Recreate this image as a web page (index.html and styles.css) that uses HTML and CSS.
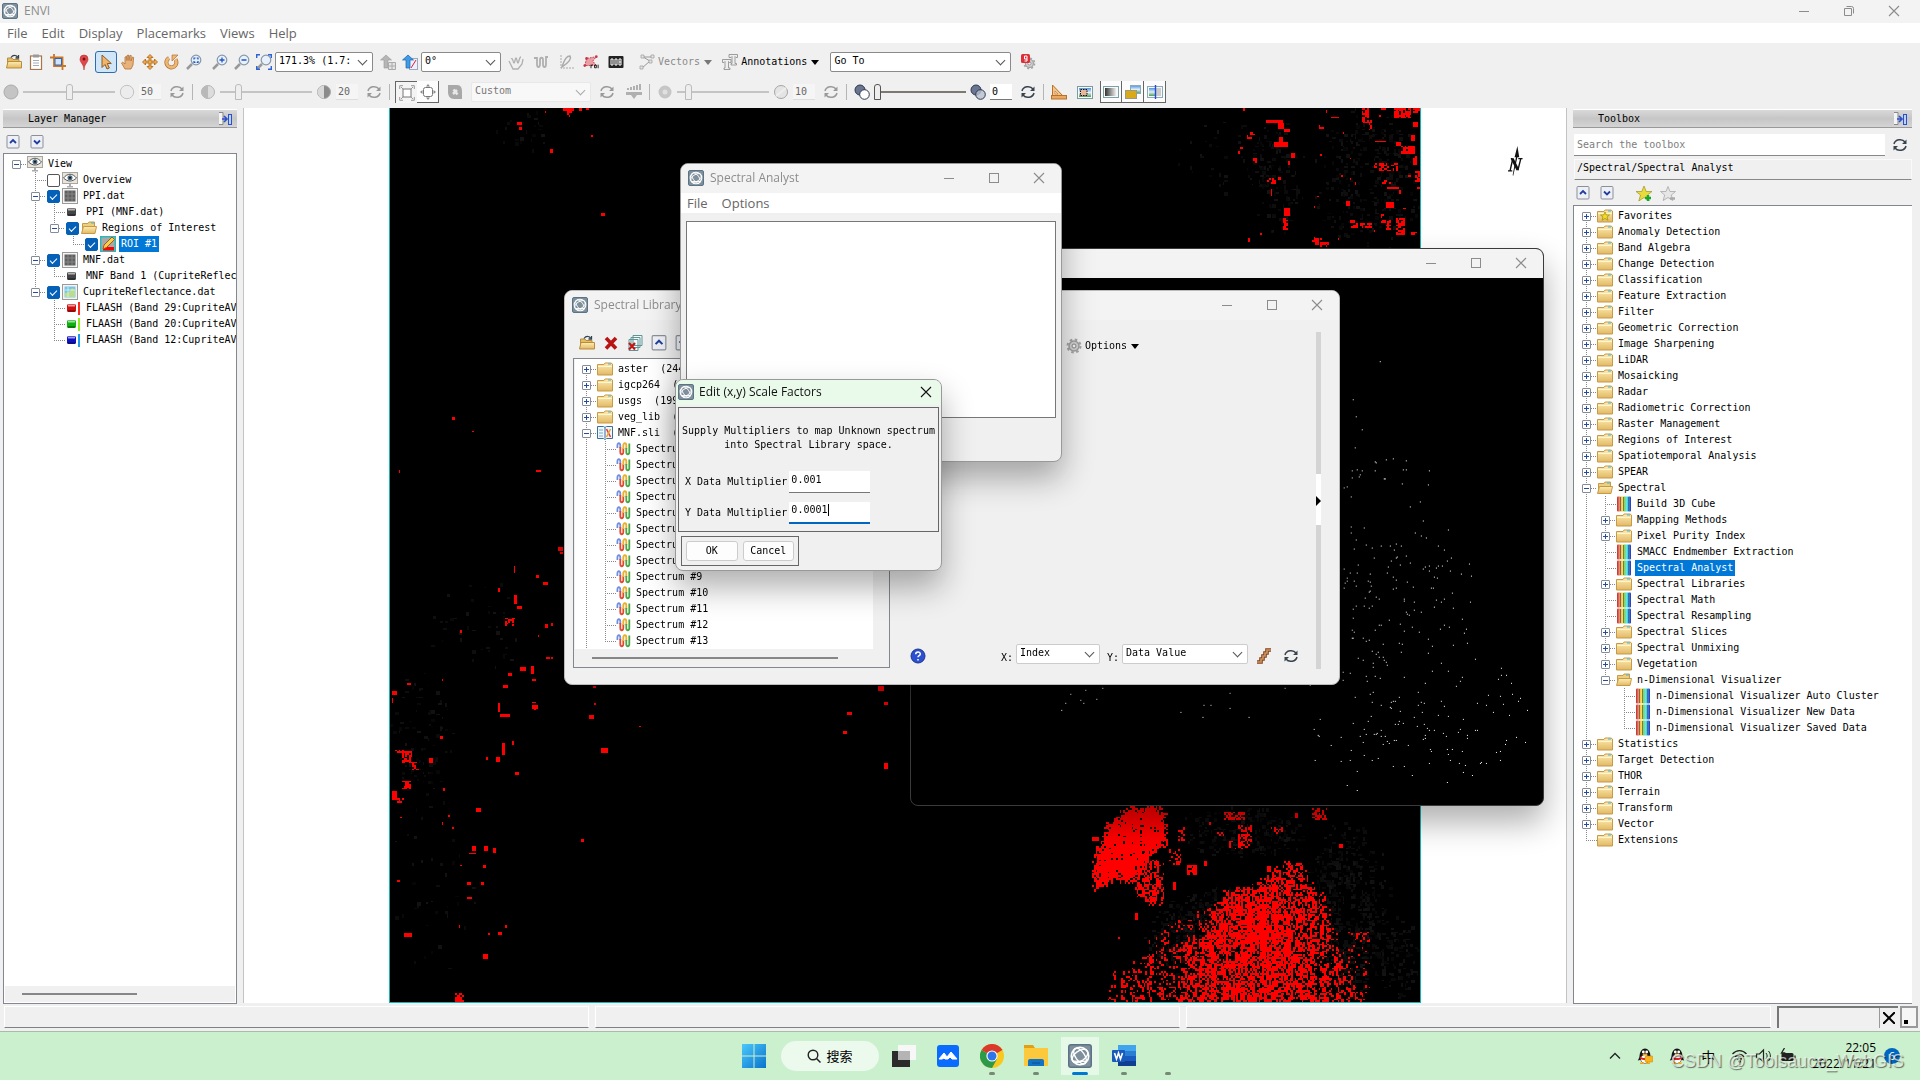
FILE: index.html
```html
<!DOCTYPE html>
<html lang="en">
<head>
<meta charset="utf-8">
<title>ENVI</title>
<link rel="stylesheet" href="styles.css">
</head>
<body>
<svg class="sprite" aria-hidden="true">
  <defs>
    <linearGradient id="gFolder" x1="0" y1="0" x2="0" y2="1"><stop offset="0" stop-color="#fdeeb4"/><stop offset="1" stop-color="#e2b864"/></linearGradient>
    <linearGradient id="gRain"><stop offset="0" stop-color="#c02828"/><stop offset=".2" stop-color="#f0987a"/><stop offset=".4" stop-color="#f8e04a"/><stop offset=".55" stop-color="#7fd06a"/><stop offset=".7" stop-color="#55f0f0"/><stop offset="1" stop-color="#2a2ab8"/></linearGradient>
    <linearGradient id="gWin" x1="0" y1="0" x2="1" y2="1"><stop offset="0" stop-color="#4cc8fb"/><stop offset="1" stop-color="#0873cc"/></linearGradient>
    <linearGradient id="gGray"><stop offset="0" stop-color="#333"/><stop offset="1" stop-color="#fff"/></linearGradient>
    <linearGradient id="gSky" x1="0" y1="0" x2="0" y2="1"><stop offset="0" stop-color="#4f93e0"/><stop offset=".5" stop-color="#dff0f8"/><stop offset="1" stop-color="#4e9a58"/></linearGradient>
  </defs>
  <symbol id="envi" viewBox="0 0 16 16"><rect x=".5" y=".5" width="15" height="15" rx="1.5" fill="#7f909d" stroke="#5b7385"/><g fill="none" stroke="#fff"><circle cx="8" cy="8" r="5.800" stroke-width="1.100"/><ellipse cx="8" cy="8" rx="6" ry="3" transform="rotate(55 8 8)" stroke-width=".9"/><ellipse cx="8" cy="8" rx="6" ry="3.400" transform="rotate(-35 8 8)" stroke-width=".9"/><path d="M3.500 11.500h9" stroke-width=".9"/></g></symbol>
  <symbol id="folder" viewBox="0 0 16 16"><path d="M.5 3.500h6.500l1-1.500h6l1.500 1v11H.5z" fill="url(#gFolder)" stroke="#c79a45"/><path d="M11 3h3" stroke="#45b3e0"/><path d="M1 5.500h14" stroke="#fff6cf"/></symbol>
  <symbol id="folderfav" viewBox="0 0 16 16"><use href="#folder"/><path d="M8 4l1.300 3h3.200L10 9l1 3.300L8 10.400 5 12.300 6 9 3.500 7h3.200z" fill="#f3dd1d" stroke="#9a8a12" stroke-width=".7"/></symbol>
  <symbol id="folderopen" viewBox="0 0 16 16"><path d="M1.500 13V3.500H7L8 2h5.500v4" fill="#edcf80" stroke="#c79a45"/><path d="M.5 13.500L2.500 6.500h13l-1.500 7z" fill="url(#gFolder)" stroke="#c79a45"/><path d="M10 3h3" stroke="#45b3e0"/></symbol>
  <symbol id="open" viewBox="0 0 16 16"><path d="M1.500 13V4H6l1 1.500h6V8" fill="#e5bd62" stroke="#b98d3c"/><path d="M.5 14L2 7.500h13.500V14z" fill="url(#gFolder)" stroke="#b98d3c"/><path d="M5 3.500c2-3 5-2.500 6.500-.5M12.500 1v3h-3" fill="none" stroke="#34424f" stroke-width="1.300"/></symbol>
  <symbol id="tool" viewBox="0 0 16 16"><rect x="1" y=".5" width="14" height="15" rx="1" fill="url(#gRain)"/><path d="M4.500 1v14M7.500 1v14" stroke="#222" stroke-opacity=".5"/><path d="M12.500 1v14" stroke="#124" stroke-opacity=".35"/></symbol>
  <symbol id="eye" viewBox="0 0 16 16"><rect x=".5" y=".5" width="15" height="11" fill="#e9e5dd" stroke="#a9a69f"/><path d="M5 14h6v1.500H5zM7 12h2v2H7z" fill="#aaa"/><path d="M1.500 6c4-5 9-5 13 0-4 4-9 4-13 0z" fill="#fff" stroke="#555"/><circle cx="8" cy="5.700" r="2.500" fill="#4b6b82"/><circle cx="8" cy="5.700" r="1" fill="#111"/></symbol>
  <symbol id="ras" viewBox="0 0 16 16"><rect x=".5" y=".5" width="15" height="15" fill="#f4f4f4" stroke="#9a9a9a"/><rect x="2.500" y="2.500" width="11" height="11" fill="#606060"/><path d="M3 6h10M3 10h10M6 3v10M10 3v10" stroke="#858585"/></symbol>
  <symbol id="rasc" viewBox="0 0 16 16"><rect x=".5" y=".5" width="15" height="15" fill="#f4f4f4" stroke="#9a9a9a"/><rect x="2.500" y="2.500" width="11" height="11" fill="#7cc3e2"/><path d="M3 13V9l4-1 3-4 3 2v7z" fill="#b9dc8e"/><path d="M6 3v10M3 6h10" stroke="#dff" stroke-opacity=".7"/></symbol>
  <symbol id="band" viewBox="0 0 10 10"><rect y="1" width="9" height="8" rx="1.500" fill="currentColor"/><path d="M1 2.500h7" stroke="#fff" stroke-opacity=".6" stroke-width="2"/><path d="M1 8h7" stroke="#000" stroke-opacity=".6"/></symbol>
  <symbol id="roi" viewBox="0 0 16 16"><rect x=".7" y=".7" width="14.600" height="14.600" fill="#a8a8a8" stroke="#2ab7b7" stroke-width="1.400"/><path d="M3 11h11v3.500H3z" fill="#f00"/><path d="M3 13l1-4 8-8 2.500 2.500-8 8z" fill="#f5d14a" stroke="#a65a1c"/></symbol>
  <symbol id="wave" viewBox="0 0 14 14"><g fill="none" stroke-width="1.800"><path d="M.9 6V3.500c0-3 2.900-3 2.900 0V6" stroke="#6f90e0"/><path d="M3.800 5v5c0 3 3 3 3 0V6" stroke="#e04a32"/><path d="M6.800 7V3.500c0-3 3-3 3 0V7" stroke="#e9b02c"/><path d="M9.800 6v4c0 3 3 3 3 0V1.500" stroke="#4aa548"/></g></symbol>
  <symbol id="sli" viewBox="0 0 16 16"><path d="M.5 1.500h6l1.500 1 1.500-1h6v12h-6l-1.500 1-1.500-1h-6z" fill="#eef6ff" stroke="#3b6f98"/><path d="M8 3v10" stroke="#3b6f98"/><path d="M9.500 4l4 8" stroke="#e33" stroke-width="1.500"/><path d="M13.500 4l-4 8" stroke="#e9a52c" stroke-width="1.500"/><path d="M2 5h4M2 8h4M2 11h4" stroke="#7ab"/></symbol>
  <symbol id="ref" viewBox="0 0 16 16"><g fill="none" stroke="currentColor" stroke-width="1.500"><path d="M2 7c1-4.500 8-6 11-2"/><path d="M14 9c-1 4.500-8 6-11 2"/></g><path d="M14.500 2.500v4.500H10zM1.500 13.500V9H6z" fill="currentColor"/></symbol>
  <symbol id="up" viewBox="0 0 14 14"><rect x="1" y=".5" width="12" height="12.500" rx="1" fill="#eef0f6" stroke="#8a8f98"/><path d="M4 8l3-3 3 3" fill="none" stroke="#1f3fa0" stroke-width="1.800"/></symbol>
  <symbol id="down" viewBox="0 0 14 14"><rect x="1" y=".5" width="12" height="12.500" rx="1" fill="#eef0f6" stroke="#8a8f98"/><path d="M4 5.500l3 3 3-3" fill="none" stroke="#1f3fa0" stroke-width="1.800"/></symbol>
  <symbol id="dock" viewBox="0 0 14 14"><path d="M1 .5h4v12H1" fill="#f4f4f4" stroke="#888"/><path d="M4 7h4M6 4l3 3-3 3" fill="none" stroke="#2b51c9" stroke-width="1.600"/><rect x="10.500" y="2.500" width="3" height="10" fill="#bcd0ff" stroke="#2b51c9"/></symbol>
  <symbol id="clip" viewBox="0 0 16 16"><rect x="2.500" y="2" width="11" height="13.500" fill="#fff" stroke="#a5764e" stroke-width="1.200"/><rect x="5" y=".5" width="6" height="3" fill="#999"/><path d="M5 6.500h6M5 9h6M5 11.500h6" stroke="#aab"/></symbol>
  <symbol id="crop" viewBox="0 0 16 16"><path d="M4 0v12h12M0 3.500h12.500V16" fill="none" stroke="#c8762a" stroke-width="1.800"/><rect x="5" y="4.500" width="6.500" height="6.500" fill="#cfe3fa" stroke="#3464ae"/></symbol>
  <symbol id="pin" viewBox="0 0 16 16"><path d="M8 16C8 10 4 9 4 5a4 4 0 018 0c0 4-4 5-4 11z" fill="#e0484c" stroke="#b8282e" stroke-width=".6"/><circle cx="8" cy="5" r="1.500" fill="#7a1014"/></symbol>
  <symbol id="cur" viewBox="0 0 16 16"><path d="M4 1v12.500l3-3 2 4.500 2.300-1-2-4.500h4z" fill="#efb56c" stroke="#8d5a20"/></symbol>
  <symbol id="hand" viewBox="0 0 16 16"><path d="M5 15L1.500 9l1.200-.8L5 10V3l1.500-.5.5 4V1.500L8.500 1 9 6.500l.8-5h1.400L11 7l1.400-4 1.200.4L13 11l-2 4z" fill="#e8b27a" stroke="#b0713a" stroke-width=".8"/></symbol>
  <symbol id="move" viewBox="0 0 16 16"><path d="M8 .5l3 3H9v3.500h3.500V5l3 3-3 3V9H9v3.500h2l-3 3-3-3h2V9H3.500v2l-3-3 3-3v2H7V3.500H5z" fill="#f0a848" stroke="#a9661a" stroke-width=".8"/></symbol>
  <symbol id="rot" viewBox="0 0 16 16"><path d="M5 4a5 5 0 106.500 1.500" fill="none" stroke="#b0713a" stroke-width="4"/><path d="M5 4a5 5 0 106.500 1.500" fill="none" stroke="#efb872" stroke-width="2.600"/><path d="M8 7V1h6z" fill="#efb872" stroke="#b0713a" stroke-width=".7"/></symbol>
  <symbol id="mag" viewBox="0 0 16 16"><path d="M1 15l5-5" stroke="#999" stroke-width="2.500"/><circle cx="10" cy="6" r="4.800" fill="#e6f1fc" stroke="#8897a8" stroke-width="1.200"/></symbol>
  <symbol id="magf" viewBox="0 0 16 16"><use href="#mag"/><path d="M8 5.500V4h1.500M10.700 4H12v1.500M12 7v1.300h-1.300M9.500 8.300H8V7" fill="none" stroke="#2356c0" stroke-width="1.200"/></symbol>
  <symbol id="magp" viewBox="0 0 16 16"><use href="#mag"/><path d="M7.500 6h5M10 3.500v5" stroke="#2356c0" stroke-width="1.300"/></symbol>
  <symbol id="magm" viewBox="0 0 16 16"><use href="#mag"/><path d="M7.500 6h5" stroke="#2356c0" stroke-width="1.500"/></symbol>
  <symbol id="mage" viewBox="0 0 16 16"><use href="#mag"/><path d="M.7 4V.7H4M12 .7h3.300V4M15.300 12v3.300H12M4 15.300H.7V12" fill="none" stroke="#2f62d4" stroke-width="1.400"/></symbol>
  <symbol id="upg" viewBox="0 0 16 16"><path d="M6 1l5.500 5H8v8H4V6H.5z" fill="#b5b5b5" stroke="#999" stroke-width=".6"/><path d="M8.500 8.500h7v7h-7zM8.500 12h7M12 8.500v7" fill="#e3e3e3" stroke="#aaa"/></symbol>
  <symbol id="upb" viewBox="0 0 16 16"><rect x="7.500" y="4.500" width="8" height="11" fill="#eef" stroke="#9ab"/><path d="M6 1l5.500 5H8v8H4V6H.5z" fill="#3f9be6" stroke="#1c62ad" stroke-width=".7"/><path d="M9 14l5-8" stroke="#d22"/></symbol>
  <symbol id="zig" viewBox="0 0 16 16"><path d="M1 4h3v6c0 4 3 4 3 0V6c0-3 3-3 3 0v4c0 4 3 4 3 0V3h2" fill="none" stroke="#b0b0b0" stroke-width="1.800"/></symbol>
  <symbol id="zigh" viewBox="0 0 16 16"><path d="M1 7l4 8h5l4-5 1-5M3 5c2-2 2 4 3 4s1-5 2-5 1 5 2 5 1-6 3-6" fill="none" stroke="#b0b0b0" stroke-width="1.300"/></symbol>
  <symbol id="plot" viewBox="0 0 16 16"><path d="M3 1v13h13" fill="none" stroke="#aaa" stroke-dasharray="2 1"/><path d="M4 13C7 4 9 2 12 2c2 3-2 7-8 11z" fill="none" stroke="#aaa" stroke-width="1.500"/></symbol>
  <symbol id="roit" viewBox="0 0 18 16"><path d="M2 12L4 4l11-2-4 5 4 5z" fill="#eb9da4" stroke="#c4354a" stroke-dasharray="2 1"/><circle cx="2" cy="12" r="1.500" fill="#c4354a"/><circle cx="4" cy="4" r="1.500" fill="#c4354a"/><circle cx="15" cy="2" r="1.500" fill="#c4354a"/><path d="M9 11v4M9 12l2-1M13 11.500h2v3h-2zM17 11v4" stroke="#111" fill="none"/></symbol>
  <symbol id="counter" viewBox="0 0 16 16"><rect x=".5" y="2" width="15" height="12" rx="1" fill="#222"/><path d="M3 5h2v6H3zM7 5h2v6H7zM11 5h2v6h-2zM11 8h2" fill="none" stroke="#fff"/></symbol>
  <symbol id="vec" viewBox="0 0 16 16"><path d="M4 3l7 4-8 7M5 3h8" fill="none" stroke="#999"/><path d="M2 1h3v3H2zM12 1h3v3h-3zM10 6h3v3h-3zM1 12h3v3H1z" fill="#e6e6e6" stroke="#999" stroke-width=".7"/></symbol>
  <symbol id="anno" viewBox="0 0 16 16"><g fill="#eee" stroke="#888" stroke-width=".8"><path d="M7 .5h8.500v3h-1.500l-1-1v7h1.500V11H9V9.500h1v-7l-1 1H7z"/><path d="M.5 5.500H9v3H7.500l-1-1V14H8v1.500H2V14h1V7.500l-1 1H.5z"/></g></symbol>
  <symbol id="gear" viewBox="0 0 16 16"><circle cx="8" cy="8" r="6.500" fill="none" stroke="#a5a5a5" stroke-width="2" stroke-dasharray="2.600 2.500"/><circle cx="8" cy="8" r="5" fill="#d0d0d0" stroke="#a0a0a0" stroke-width="1.500"/><circle cx="8" cy="8" r="2" fill="#f4f4f4" stroke="#888"/></symbol>
  <symbol id="gear9" viewBox="0 0 16 16"><g transform="translate(3 3) scale(.8)"><use href="#gear" width="16" height="16"/></g><rect x="1" y="0" width="9" height="9" rx="1.500" fill="#dc3038"/><path d="M7 5H4.500V2H7v5H4.500" fill="none" stroke="#fff"/></symbol>
  <symbol id="ball" viewBox="0 0 16 16"><circle cx="8" cy="8" r="7" fill="#c4c4c4" stroke="#aaa"/></symbol>
  <symbol id="ballw" viewBox="0 0 16 16"><circle cx="8" cy="8" r="6.700" fill="#ececec" stroke="#c2c2c2"/></symbol>
  <symbol id="half" viewBox="0 0 16 16"><circle cx="8" cy="8" r="6.500" fill="#dcdcdc" stroke="#b5b5b5"/><path d="M8 1.500a6.500 6.500 0 000 13z" fill="#b9b9b9"/></symbol>
  <symbol id="half2" viewBox="0 0 16 16"><circle cx="8" cy="8" r="6.500" fill="#8b8b8b" stroke="#aaa"/><path d="M8 1.500a6.500 6.500 0 000 13z" fill="#d9d9d9"/></symbol>
  <symbol id="ring" viewBox="0 0 16 16"><circle cx="8" cy="8" r="4.500" fill="#e0e0e0" stroke="#c6c6c6" stroke-width="4"/></symbol>
  <symbol id="sharp" viewBox="0 0 16 16"><circle cx="8" cy="8" r="6.500" fill="#e4e4e4" stroke="#a5a5a5"/><path d="M3 12L13 4" stroke="#eee" stroke-width="2"/></symbol>
  <symbol id="two" viewBox="0 0 16 16"><circle cx="6" cy="6" r="5" fill="#6a7590" stroke="#2d3850"/><circle cx="10.500" cy="10.500" r="4.800" fill="#fff" stroke="#2d3850"/></symbol>
  <symbol id="two2" viewBox="0 0 16 16"><circle cx="6" cy="6" r="5" fill="#6a7590" stroke="#2d3850"/><circle cx="10.500" cy="10.500" r="4.800" fill="#b8c0d0" fill-opacity=".8" stroke="#2d3850"/></symbol>
  <symbol id="ext" viewBox="0 0 16 16"><rect x="4" y="4" width="8" height="8" fill="#fff" stroke="#777"/><path d="M.7 4V.7H4M12 .7h3.300V4M15.300 12v3.300H12M4 15.300H.7V12M4 4L2 2M12 4l2-2M4 12l-2 2M12 12l2 2" fill="none" stroke="#999"/></symbol>
  <symbol id="ext2" viewBox="0 0 16 16"><rect x="3.500" y="3.500" width="9" height="9" rx="2" fill="#fff" stroke="#777"/><path d="M8 0l2 2.500H6zM8 16l2-2.500H6zM0 8l2.500-2v4zM16 8l-2.500-2v4z" fill="#888"/></symbol>
  <symbol id="leaf" viewBox="0 0 16 16"><path d="M1 1h9c4 0 5 3 5 7v7H7c-4 0-6-3-6-7z" fill="#a8a8a8"/><path d="M6 10l4-4M6.500 5.500l4 5" fill="none" stroke="#e8e8e8" stroke-width="2.500"/></symbol>
  <symbol id="hist" viewBox="0 0 16 16"><path d="M1 6V4h2v2zM4 6V3h2v3zM7 6V2h2v4zM10 6V1h2v5zM13 6V0h2v6zM0 8h16v3H0zM5 11h6l-3 4z" fill="#b0b0b0"/></symbol>
  <symbol id="meas" viewBox="0 0 16 16"><path d="M1.500 1v11L12 12z" fill="#f3c48c" stroke="#b8722a"/><path d="M4 7v3h3z" fill="#f0f0f0" stroke="#b8722a" stroke-width=".6"/><rect x=".5" y="11.500" width="15" height="3.500" fill="#eba860" stroke="#b8722a"/></symbol>
  <symbol id="pic" viewBox="0 0 16 16"><rect x=".5" y="2.500" width="15" height="12" fill="#f8f8f8" stroke="#7a9aa8"/><rect x="2" y="4" width="12" height="9" fill="url(#gSky)"/><rect x="3.500" y="5.500" width="6.500" height="6" fill="#e9b69a" stroke="#111" stroke-dasharray="1.500 1"/></symbol>
  <symbol id="grad" viewBox="0 0 16 16"><rect x=".5" y="2.500" width="15" height="11" fill="#f8f8f8" stroke="#7aa0a8"/><rect x="2" y="4" width="12" height="8" fill="url(#gGray)"/></symbol>
  <symbol id="stack" viewBox="0 0 16 16"><rect x="5.500" y="1.500" width="10" height="8" fill="url(#gSky)" stroke="#8ab"/><rect x=".5" y="6.500" width="11" height="8" fill="#d9a91a" stroke="#9a9a80"/></symbol>
  <symbol id="swipe" viewBox="0 0 16 16"><rect x=".5" y="2.500" width="15" height="11" fill="#f8f8f8" stroke="#8ab"/><rect x="2" y="4" width="6" height="8" fill="url(#gSky)"/><rect x="8" y="4" width="6" height="8" fill="#ccc"/><path d="M8.500 1v14" stroke="#2448d8" stroke-width="1.400"/></symbol>
  <symbol id="staradd" viewBox="0 0 16 16"><path d="M8 0l2.200 5.500H16L11.500 9l1.700 6L8 11.500 2.800 15l1.700-6L0 5.500h5.800z" fill="#eadb3c" stroke="#9c9320" stroke-width=".7"/><path d="M12 9v6M9 12h6" stroke="#17a52c" stroke-width="2.400"/></symbol>
  <symbol id="starsub" viewBox="0 0 16 16"><path d="M8 .5l2 5h5.500L11.300 9l1.500 5.500L8 11.500 3.200 14.500 4.700 9 .5 5.500H6z" fill="#e6e6e6" stroke="#b5b5b5"/><path d="M10 12.500h5" stroke="#aaa" stroke-width="2.400"/></symbol>
  <symbol id="x" viewBox="0 0 16 16"><path d="M3 3l10 10.500M13 3L3 13.500" stroke="#b81414" stroke-width="3.600"/></symbol>
  <symbol id="xall" viewBox="0 0 16 16"><path d="M6 .5h9v10H6zM4 2.500h9v10H4zM2 4.500h9v11H2z" fill="#f4fafa" stroke="#5e9494"/><path d="M2 8l6 6.500M8 8l-6 6.500" stroke="#c01818" stroke-width="2.200"/></symbol>
  <symbol id="help" viewBox="0 0 16 16"><circle cx="8" cy="8" r="7" fill="#2c50d0" stroke="#1b358f"/><path d="M5.700 6.300c0-3 4.600-3 4.600-.3 0 1.600-2.300 1.600-2.300 3.300M8 11v1.500" fill="none" stroke="#fff" stroke-width="1.500"/></symbol>
  <symbol id="stair" viewBox="0 0 16 16"><path d="M1 14h4v-3h2V8h2V5h2V2h4" fill="none" stroke="#7d4320" stroke-width="3.600"/><path d="M1 14h4v-3h2V8h2V5h2V2h4" fill="none" stroke="#d4935a" stroke-width="1.600"/></symbol>
  <symbol id="north" viewBox="0 0 16 32"><path d="M10 0l2 12h-2L5.500 32 5 31 8.500 12H7z" fill="#111"/><path d="M0 26.500h4.500M2.300 26L5 14M3 13.500h2" fill="none" stroke="#111" stroke-width="1.500"/><path d="M4.500 13.500l6 12" stroke="#111" stroke-width="3"/><path d="M10.500 26l3-12M11 13.500h4.500" fill="none" stroke="#111" stroke-width="1.500"/></symbol>
  <symbol id="wmin" viewBox="0 0 12 12"><path d="M1 6.500h10" stroke="currentColor"/></symbol>
  <symbol id="wmax" viewBox="0 0 12 12"><rect x="1.500" y="1.500" width="9" height="9" fill="none" stroke="currentColor"/></symbol>
  <symbol id="wres" viewBox="0 0 12 12"><path d="M1.500 3.500h7v7h-7zM3.500 1.500h5q2 0 2 2v5" fill="none" stroke="currentColor"/></symbol>
  <symbol id="wcl" viewBox="0 0 12 12"><path d="M1 1l10 10M11 1L1 11" stroke="currentColor" stroke-width="1.100"/></symbol>
  <symbol id="cross" viewBox="0 0 12 12"><path d="M0 0l12 12M12 0L0 12" stroke="#000" stroke-width="2"/></symbol>
  <symbol id="qq" viewBox="0 0 16 16"><ellipse cx="8" cy="8" rx="5.500" ry="7.500" fill="#151515"/><path d="M3 8L.8 12.500 3 12zM13 8l2.200 4.500L13 12z" fill="#151515"/><ellipse cx="8" cy="11" rx="4" ry="4" fill="#fff"/><path d="M3 8.500c3 2 7 2 10 0v2c-3 2-7 2-10 0z" fill="#e02020"/><circle cx="6.300" cy="4" r="1.400" fill="#fff"/><circle cx="9.700" cy="4" r="1.400" fill="#fff"/><ellipse cx="8" cy="6.500" rx="2.500" ry="1" fill="#f3a51a"/><path d="M3 15.200h4M9 15.200h4" stroke="#f3a51a" stroke-width="1.500"/></symbol>
  <symbol id="qqc" viewBox="0 0 16 16"><use href="#qq"/><rect x="8" y="8" width="8" height="6" rx="1" fill="#f8b41c" stroke="#c67c10" stroke-width=".5"/></symbol>
</svg>

<header class="titlebar">
  <svg class="i16"><use href="#envi"/></svg><span class="caption">ENVI</span>
  <div class="winbtns"><button aria-label="Minimize"><svg><use href="#wmin"/></svg></button><button aria-label="Restore"><svg><use href="#wres"/></svg></button><button aria-label="Close"><svg><use href="#wcl"/></svg></button></div>
</header>
<nav class="menubar"><button>File</button><button>Edit</button><button>Display</button><button>Placemarks</button><button>Views</button><button>Help</button></nav>

<div class="toolbars">
  <div class="bar">
    <div class="grp">
      <button class="tb" aria-label="Open"><svg><use href="#open"/></svg></button><button class="tb" aria-label="Data Manager"><svg><use href="#clip"/></svg></button><button class="tb" aria-label="Crop"><svg><use href="#crop"/></svg></button>
    </div>
    <div class="grp">
      <button class="tb" aria-label="Placemark"><svg><use href="#pin"/></svg></button><button class="tb on" aria-label="Select"><svg><use href="#cur"/></svg></button><button class="tb" aria-label="Pan"><svg><use href="#hand"/></svg></button><button class="tb" aria-label="Fly"><svg><use href="#move"/></svg></button><button class="tb" aria-label="Rotate"><svg><use href="#rot"/></svg></button><button class="tb" aria-label="Zoom"><svg><use href="#magf"/></svg></button>
    </div>
    <div class="grp">
      <button class="tb" aria-label="Zoom in"><svg><use href="#magp"/></svg></button><button class="tb" aria-label="Zoom out"><svg><use href="#magm"/></svg></button><button class="tb" aria-label="Zoom to extent"><svg><use href="#mage"/></svg></button>
      <span class="sel w-zoom"><select aria-label="Zoom level"><option>171.3% (1.7:1)</option></select></span>
    </div>
    <div class="grp">
      <button class="tb" aria-label="North up"><svg><use href="#upg"/></svg></button><button class="tb" aria-label="Rotate to"><svg><use href="#upb"/></svg></button>
      <span class="sel w-rot"><select aria-label="Rotation"><option>0°</option></select></span>
    </div>
    <div class="grp five">
      <button class="tb" aria-label="Spectral profile"><svg><use href="#zigh"/></svg></button><button class="tb" aria-label="Arbitrary profile"><svg><use href="#zig"/></svg></button><button class="tb" aria-label="Scatter plot"><svg><use href="#plot"/></svg></button><button class="tb" aria-label="Region of interest"><svg><use href="#roit"/></svg></button><button class="tb" aria-label="Feature counting"><svg><use href="#counter"/></svg></button>
    </div>
    <button class="drop off"><svg><use href="#vec"/></svg>Vectors<i></i></button>
    <button class="drop"><svg><use href="#anno"/></svg>Annotations<i></i></button>
    <span class="sel w-goto"><select aria-label="Go to"><option>Go To</option></select></span>
    <button class="tb last" aria-label="Jobs"><svg><use href="#gear9"/></svg></button>
  </div>
  <div class="bar second">
    <div class="grp adj"><svg class="ic"><use href="#ball"/></svg><input type="range" aria-label="Brightness" value="50" disabled><svg class="ic"><use href="#ballw"/></svg><input type="text" aria-label="Brightness value" value="50" disabled><button class="tb gray" aria-label="Reset brightness"><svg><use href="#ref"/></svg></button></div>
    <hr>
    <div class="grp adj"><svg class="ic"><use href="#half"/></svg><input type="range" aria-label="Contrast" value="18" disabled><svg class="ic"><use href="#half2"/></svg><input type="text" aria-label="Contrast value" value="20" disabled><button class="tb gray" aria-label="Reset contrast"><svg><use href="#ref"/></svg></button></div>
    <hr>
    <div class="grp custom"><button class="tg" aria-label="Stretch on view"><svg><use href="#ext"/></svg></button><button class="tg" aria-label="Stretch on full"><svg><use href="#ext2"/></svg></button><svg class="ic"><use href="#leaf"/></svg><span class="sel off w-custom"><select aria-label="Stretch" disabled><option>Custom</option></select></span><button class="tb gray" aria-label="Reset stretch"><svg><use href="#ref"/></svg></button><button class="tb" aria-label="Histogram"><svg><use href="#hist"/></svg></button></div>
    <hr>
    <div class="grp adj"><svg class="ic"><use href="#ring"/></svg><input type="range" aria-label="Sharpen" value="9" disabled><svg class="ic"><use href="#sharp"/></svg><input type="text" aria-label="Sharpen value" value="10" disabled><button class="tb gray" aria-label="Reset sharpen"><svg><use href="#ref"/></svg></button></div>
    <hr>
    <div class="grp adj"><svg class="ic"><use href="#two"/></svg><input type="range" aria-label="Transparency" value="0"><svg class="ic"><use href="#two2"/></svg><input type="text" aria-label="Transparency value" value="0"><button class="tb" aria-label="Reset transparency"><svg><use href="#ref"/></svg></button></div>
    <hr>
    <div class="grp wide"><button class="tb" aria-label="Measure"><svg><use href="#meas"/></svg></button><button class="tb" aria-label="Chip view"><svg><use href="#pic"/></svg></button><div class="grp"><button class="tg" aria-label="Blend"><svg><use href="#grad"/></svg></button><button class="tg" aria-label="Flicker"><svg><use href="#stack"/></svg></button><button class="tg" aria-label="Swipe"><svg><use href="#swipe"/></svg></button></div></div>
  </div>
</div>

<main class="work">
  <aside class="layers">
    <h2 class="dockhead">Layer Manager<svg><use href="#dock"/></svg></h2>
    <div class="minis"><button aria-label="Collapse all"><svg><use href="#up"/></svg></button><button aria-label="Expand all"><svg><use href="#down"/></svg></button></div>
    <div class="treebox"><ul class="tree" id="layerTree"></ul><div class="hscroll"><span></span></div></div>
  </aside>
  <section class="view">
    <canvas id="raster" class="raster" width="600" height="521"></canvas>
    <svg class="north"><use href="#north"/></svg>
  </section>
  <aside class="toolbox">
    <h2 class="dockhead">Toolbox<svg><use href="#dock"/></svg></h2>
    <div class="search"><input type="text" aria-label="Search the toolbox" placeholder="Search the toolbox"><button class="tb" aria-label="Refresh"><svg><use href="#ref"/></svg></button></div>
    <input class="path" type="text" aria-label="Tool path" value="/Spectral/Spectral Analyst" readonly>
    <div class="minis"><button aria-label="Collapse all"><svg><use href="#up"/></svg></button><button aria-label="Expand all"><svg><use href="#down"/></svg></button><button class="star" aria-label="Add favorite"><svg><use href="#staradd"/></svg></button><button aria-label="Remove favorite"><svg><use href="#starsub"/></svg></button></div>
    <div class="treebox"><ul class="tree" id="toolTree"></ul></div>
  </aside>
</main>

<footer class="status"><span></span><span></span><span></span><div class="sunk"><button aria-label="Cancel task"><svg><use href="#cross"/></svg></button></div><button class="corner" aria-label="Task list"><i></i></button></footer>

<section class="win plot">
  <header><div class="winbtns"><button aria-label="Minimize"><svg><use href="#wmin"/></svg></button><button aria-label="Maximize"><svg><use href="#wmax"/></svg></button><button aria-label="Close"><svg><use href="#wcl"/></svg></button></div></header>
  <canvas id="scatter" width="631" height="526"></canvas>
</section>

<section class="win library">
  <header><svg class="i16"><use href="#envi"/></svg><span class="caption">Spectral Library Viewer</span><div class="winbtns"><button aria-label="Minimize"><svg><use href="#wmin"/></svg></button><button aria-label="Maximize"><svg><use href="#wmax"/></svg></button><button aria-label="Close"><svg><use href="#wcl"/></svg></button></div></header>
  <div class="libbody">
    <div class="libleft">
      <div class="libtools"><button class="tb" aria-label="Open"><svg><use href="#open"/></svg></button><button class="tb" aria-label="Remove"><svg><use href="#x"/></svg></button><button class="tb" aria-label="Remove all"><svg><use href="#xall"/></svg></button><button class="tb" aria-label="Collapse"><svg><use href="#up"/></svg></button><button class="tb" aria-label="Expand"><svg><use href="#down"/></svg></button></div>
      <div class="treebox"><ul class="tree" id="libTree"></ul><div class="hscroll"><span></span></div></div>
    </div>
    <div class="libplot">
      <button class="drop"><svg><use href="#gear"/></svg>Options<i></i></button>
      <div class="axes">
        <button class="tb help" aria-label="Help"><svg><use href="#help"/></svg></button>
        <label for="ax">X:</label><span class="sel w-x"><select id="ax"><option>Index</option></select></span>
        <label for="ay">Y:</label><span class="sel w-y"><select id="ay"><option>Data Value</option></select></span>
        <button class="tb" aria-label="Stack"><svg><use href="#stair"/></svg></button><button class="tb" aria-label="Reset"><svg><use href="#ref"/></svg></button>
      </div>
    </div>
    <button class="grip" aria-label="Show panel"><i></i></button>
  </div>
</section>

<section class="win analyst">
  <header><svg class="i16"><use href="#envi"/></svg><span class="caption">Spectral Analyst</span><div class="winbtns"><button aria-label="Minimize"><svg><use href="#wmin"/></svg></button><button aria-label="Maximize"><svg><use href="#wmax"/></svg></button><button aria-label="Close"><svg><use href="#wcl"/></svg></button></div></header>
  <nav class="menubar"><button>File</button><button>Options</button></nav>
  <div class="list"></div>
</section>

<form class="win dialog" onsubmit="return false">
  <header><svg class="i16"><use href="#envi"/></svg><span class="caption">Edit (x,y) Scale Factors</span><div class="winbtns"><button type="button" aria-label="Close"><svg><use href="#wcl"/></svg></button></div></header>
  <div class="fields">
    <p>Supply Multipliers to map Unknown spectrum<br>into Spectral Library space.</p>
    <div class="field"><label for="mx">X Data Multiplier</label><input id="mx" type="text" value="0.001"></div>
    <div class="field active"><label for="my">Y Data Multiplier</label><input id="my" type="text" value="0.0001"><i class="caret"></i></div>
  </div>
  <div class="actions"><button>OK</button><button type="button">Cancel</button></div>
</form>

<footer class="taskbar">
  <div class="apps">
    <button class="app" aria-label="Start"><svg viewBox="0 0 24 24"><path d="M0 0h11.500v11.500H0zM12.500 0H24v11.500H12.500zM0 12.500h11.500V24H0zM12.500 12.500H24V24H12.500z" fill="url(#gWin)"/></svg></button>
    <button class="find"><svg viewBox="0 0 14 14"><circle cx="6" cy="6" r="4.800" fill="none" stroke="#222" stroke-width="1.400"/><path d="M9.500 9.500L13.500 13.500" stroke="#222" stroke-width="1.500"/></svg>搜索</button>
    <button class="app" aria-label="Task view"><svg viewBox="0 0 24 24"><path d="M6 1h18v15H6z" fill="#f7f7f7"/><path d="M0 7h18v16H0z" fill="#2b2b2b"/><path d="M6 7h12v9H6z" fill="#b4b4b4"/></svg></button>
    <button class="app" aria-label="Meetings"><svg viewBox="0 0 24 24"><rect x="1" y="1" width="22" height="22" rx="3" fill="#0a6cff"/><path d="M3 15l5-6 3 4 4-5 6 7h-5l-2-2-2 2H9l-1-1-2 1z" fill="#fff" stroke="#fff" stroke-linejoin="round"/></svg></button>
    <button class="app run" aria-label="Chrome"><svg viewBox="0 0 24 24"><circle cx="12" cy="12" r="12" fill="#f8c81c"/><path d="M12 12L1.600 6A12 12 0 0122.400 6z" fill="#d93a2c"/><path d="M12 12L1.600 6A12 12 0 0012 24l5-9z" fill="#2c9a48"/><path d="M12 6h10.400L20 4 4 4z" fill="#d93a2c"/><circle cx="12" cy="12" r="5.600" fill="#fff"/><circle cx="12" cy="12" r="4.500" fill="#2f74e8"/></svg></button>
    <button class="app run" aria-label="Files"><svg viewBox="0 0 24 24"><path d="M0 1h9l2 3v4H0z" fill="#dfa012"/><path d="M0 4h24v18H0z" fill="#fcc93c"/><path d="M4 22v-5q0-2 2-2h12q2 0 2 2v5z" fill="#1273c4"/><path d="M8 19h8" stroke="#0b4f8c"/></svg></button>
    <button class="app run current" aria-label="ENVI"><svg><use href="#envi"/></svg></button>
    <button class="app run" aria-label="Word"><svg viewBox="0 0 24 24"><path d="M6 1h18v6H6z" fill="#41a5ee"/><path d="M6 7h18v5H6z" fill="#2b7cd3"/><path d="M6 12h18v5H6z" fill="#185abd"/><path d="M6 17h18v5H6z" fill="#103f91"/><rect y="6" width="13" height="12" rx="1" fill="#185abd"/><path d="M2.500 9l2 6 2-6 2 6 2-6" fill="none" stroke="#fff" stroke-width="1.600"/></svg></button>
    <button class="app run" aria-label="Application"></button>
  </div>
  <div class="tray">
    <svg class="chev" viewBox="0 0 12 12"><path d="M1 8.500l5-5 5 5" fill="none" stroke="#222" stroke-width="1.300"/></svg>
    <svg class="i16"><use href="#qqc"/></svg><svg class="i16"><use href="#qq"/></svg><span class="ime">中</span>
    <span class="sys"><svg viewBox="0 0 16 16"><path d="M1 6c4-4.500 10-4.500 14 0M3.500 8.700c3-3 6-3 9 0M5.700 11.300c1.600-1.500 3-1.500 4.600 0" fill="none" stroke="#222" stroke-width="1.300"/><circle cx="8" cy="13.500" r="1.200" fill="#222"/></svg><svg viewBox="0 0 16 16"><path d="M1 6h3l4-4v12l-4-4H1z" fill="none" stroke="#222" stroke-width="1.200"/><path d="M10.500 5c1.500 2 1.500 4 0 6M13 3c2.500 3 2.500 7 0 10" fill="none" stroke="#222"/></svg><svg viewBox="0 0 16 16"><rect x="2" y="5" width="12" height="8" rx="1.500" fill="#222"/><path d="M15.500 7.500v3M5 0L2 5h3L3 9" stroke="#222" stroke-width="1.300" fill="none"/></svg></span>
    <div class="clock"><span>22:05</span><span>2022/11/21</span></div><span class="badge">6</span>
  </div>
  <span class="mark">CSDN @Toolsauce_WebGIS</span>
</footer>
<script src="app.js"></script>
</body>
</html>
```
FILE: styles.css
```css
* { box-sizing: border-box; }
html, body { height: 100%; }
body { margin: 0; display: flex; flex-direction: column; overflow: hidden; position: relative; background: #f0f0f0; color: #000; font: 10px/16px "DejaVu Sans Mono", "Liberation Mono", "Noto Sans CJK SC", monospace; }
button, input, select { font: inherit; color: inherit; margin: 0; padding: 0; border: 0; border-radius: 0; background: none; }
select { appearance: none; }
svg { display: block; flex: none; }
h2, p, ul { margin: 0; padding: 0; font: inherit; }
.sprite { position: absolute; width: 0; height: 0; }
.i16 { width: 16px; height: 16px; }

/* title bars and menus */
.titlebar, .win > header { display: flex; align-items: center; gap: 6px; padding-left: 2px; background: #f3f3f3; color: #8c8c8c; font: 12px/16px "Open Sans", "Noto Sans", sans-serif; }
.titlebar { height: 23px; padding-right: 4px; padding-bottom: 2px; }
.winbtns { display: flex; margin-left: auto; }
.winbtns button { width: 45px; height: 20px; display: grid; place-items: center; }
.winbtns svg { width: 12px; height: 12px; }
.menubar { display: flex; gap: 14px; height: 20px; padding: 0 7px; background: #fff; }
.menubar button { color: #666; font: 13px/20px "Open Sans", "Noto Sans", sans-serif; }

/* toolbars */
.toolbars { height: 65px; padding-top: 6px; }
.bar { display: flex; align-items: center; height: 26px; padding-left: 3px; gap: 4px; }
.bar.second { height: 24px; margin-top: 5px; padding-left: 0; gap: 2px; }
.grp { display: flex; align-items: center; }
.grp.wide { gap: 4px; }
.grp.five { gap: 3px; }
.tb, .ic { width: 22px; height: 22px; flex: none; }
.tb { display: grid; place-items: center; color: #39434f; }
.tb svg { width: 16px; height: 16px; }
.ic { padding: 3px; }
.tb.on { background: #cfe5f8; border: 1px solid #2c6cb0; border-radius: 3px; }
.tb.gray { color: #999; }
.tb.last { margin-left: 2px; }
.sel { position: relative; display: block; height: 20px; flex: none; }
.sel select { width: 100%; height: 100%; padding: 0 20px 2px 3px; background: #fff; border: 1px solid #8a8a8a; border-radius: 2px; opacity: 1; }
.sel::after { content: ""; position: absolute; right: 7px; top: 5px; width: 6px; height: 6px; border: solid #555; border-width: 0 1px 1px 0; transform: rotate(45deg); pointer-events: none; }
.sel.off select { background: #f8f8f8; border-color: #e8e8e8; color: #777; }
.sel.off::after { border-color: #aaa; }
.w-zoom { width: 98px; }
.w-rot { width: 80px; }
.w-goto { width: 181px; margin-left: 7px; }
.w-custom { width: 120px; }
.drop { display: flex; align-items: center; gap: 3px; padding-left: 6px; height: 20px; }
.drop svg { width: 16px; height: 16px; }
.drop i { border: solid transparent; border-width: 5px 4px 0; border-top-color: #000; margin-left: 1px; }
.drop.off { color: #8a8a8a; margin-left: 2px; }
.drop.off i { border-top-color: #777; }
hr { width: 1px; height: 16px; margin: 0 2px; border: 0; background: #b5b5b5; flex: none; }
.adj { gap: 1px; }
.adj input[type=text] { width: 22px; height: 16px; padding-left: 2px; background: #f5f5f5; border-bottom: 1px solid #ddd; color: #666; }
.adj .tb { margin-left: 4px; }
.adj input[type=text]:enabled { background: #fff; color: #000; border-color: #777; }
input[type=range] { appearance: none; width: 92px; height: 18px; background: linear-gradient(#c4c4c4, #c4c4c4) center / 100% 2px no-repeat; }
input[type=range]::-webkit-slider-thumb { appearance: none; width: 7px; height: 16px; background: #eee; border: 1px solid #bbb; border-radius: 3px 3px 0 0; }
input[type=range]:enabled { background: linear-gradient(#7d7972, #7d7972) center / 100% 2px no-repeat; }
input[type=range]:enabled::-webkit-slider-thumb { border-color: #555; }
.tg { width: 22px; height: 22px; display: grid; place-items: center; background: #fcfcfc; border: solid #666; border-width: 0 1px 1px 0; }
.tg:first-child { border-left-width: 1px; }
.tg svg { width: 16px; height: 16px; }
.custom { gap: 5px; padding-left: 1px; }
.custom .tg:first-child { background: #f4f4f4; border-width: 1px 0 0 1px; }
.custom .tg + .tg { margin-left: -5px; }

/* docked panels */
.work { flex: 1; min-height: 0; display: grid; grid-template-columns: 237px 1fr 347px; column-gap: 6px; }
.layers, .toolbox { display: flex; flex-direction: column; min-height: 0; padding-top: 1px; }
.layers { padding-left: 3px; }
.toolbox { padding-right: 8px; }
.dockhead { display: flex; align-items: center; justify-content: space-between; height: 19px; padding: 0 5px 0 25px; background: linear-gradient(#d9d9d9, #c6c6c6 50%, #d4d4d4); border-bottom: 1px solid #999; border-top: 1px solid #fff; }
.dockhead svg { width: 14px; height: 14px; }
.minis { display: flex; gap: 10px; padding: 7px 3px 4px; height: 25px; }
.minis button, .minis svg { width: 14px; height: 14px; }
.minis .star { margin-left: 12px; }
.minis .star svg, .minis .star + button svg { width: 16px; height: 16px; }
.treebox { flex: 1; min-height: 0; display: flex; flex-direction: column; background: #fff; border: 1px solid #828790; overflow: hidden; }
.toolbox .treebox { border-right: 0; }
.toolbox .minis { padding: 6px 3px 4px; }
.search { display: flex; justify-content: space-between; padding: 6px 0 3px 1px; }
.search input { flex: 1; height: 22px; padding: 0 3px; background: #fff; border-bottom: 1px solid #888; }
.search .tb { margin: 0 1px 0 4px; }
.search input::placeholder { color: #7d7d7d; opacity: 1; }
.path { height: 21px; margin-left: 1px; padding: 0 2px 4px; border: 1px solid #fafafa; border-bottom-color: #888; }

/* trees */
.tree { flex: 1; min-height: 0; overflow: hidden; padding: 2px 0 0 8px; list-style: none; white-space: nowrap; }
.tree ul { list-style: none; padding-left: 19px; }
.tree li { background: repeating-linear-gradient(#888 0 1px, transparent 1px 2px) 4px 0 / 1px 100% no-repeat; }
.tree li:last-child { background-size: 1px 8px; }
.tree > li:first-child { background-position-y: 8px; }
.tree > li:first-child:last-child { background: none; }
.row { display: flex; align-items: center; height: 16px; }
.row > * { flex: none; }
.ex { width: 9px; height: 9px; border: 1px solid #848c98; border-radius: 1px; background: linear-gradient(#2b4a9c, #2b4a9c) center / 5px 1px no-repeat, #fff; }
.ex.plus { background: linear-gradient(#2b4a9c, #2b4a9c) center / 5px 1px no-repeat, linear-gradient(#2b4a9c, #2b4a9c) center / 1px 5px no-repeat, #fff; }
.stub { width: 6px; height: 1px; background: repeating-linear-gradient(90deg, #888 0 1px, transparent 1px 2px); }
.stub.long { width: 11px; margin-left: 4px; }
.row svg { width: 16px; height: 16px; }
.row svg.t-wave { width: 15px; height: 14px; }
.row svg.t-band { width: 10px; height: 10px; margin-left: 2px; }
.row svg.t-band + span { margin-left: 7px; }
.row span { padding: 0 2px; margin-left: 3px; }
.row .bar2 { width: 2px; height: 13px; margin-left: 1px; }
.row .bar2 + span { margin-left: 4px; }
.row .sel-label { background: #0078d7; color: #fff; }
.row input { appearance: none; width: 13px; height: 13px; margin: 0 2px 0 1px; border: 1px solid #555; border-radius: 2px; background: #fff; display: grid; place-items: center; }
.row input:checked { background: #0560b8; border-color: #0560b8; }
.row input:checked::before { content: ""; width: 6px; height: 3px; border: solid #fff; border-width: 0 0 1px 1px; transform: rotate(-45deg); }
.hscroll { height: 16px; background: #f0f0f0; padding: 7px 0 0 17px; margin: 0 1px 1px; flex: none; }
.hscroll span { display: block; width: 54%; height: 2px; background: #868686; }

/* image view */
.view { position: relative; background: #fff; border: solid #c3c3c3; border-width: 0 1px; margin-bottom: 1px; }
.raster { display: block; width: 78%; height: 100%; margin-left: 11%; border: solid #12b5b5; border-width: 0 1px 1px; image-rendering: pixelated; background: #000; }
.north { position: absolute; right: 43px; top: 37px; width: 15px; height: 32px; }

.status { display: flex; gap: 6px; padding: 4px 2px 3px 4px; height: 30px; border-bottom: 1px solid #a9bba9; }
.status > span { flex: 1; border: 1px solid #fff; border-bottom-color: #808080; }
.sunk { width: 121px; display: flex; justify-content: flex-end; border: solid #777; border-width: 2px 0 0 2px; }
.sunk button { width: 19px; display: grid; place-items: center; border-left: 1px solid #999; }
.sunk svg { width: 12px; height: 12px; }
.corner { width: 18px; border: 2px solid #999; margin-left: -4px; background: #f5f5f5; display: flex; align-items: flex-end; padding: 2px; }
.corner i { width: 4px; height: 4px; background: #000; }

/* floating windows */
.win { position: absolute; display: flex; flex-direction: column; background: #f0f0f0; border: 1px solid #999; border-radius: 8px; overflow: hidden; box-shadow: 0 16px 32px rgba(0,0,0,.32); }
.win > header { height: 29px; flex: none; padding: 0 0 2px 7px; }
.plot { left: 910px; top: 248px; width: 634px; height: 558px; background: #000; border-color: #3a3a3a; }
.plot canvas { display: block; }
.library { left: 564px; top: 290px; width: 776px; height: 395px; border-color: #bbb; }
.libbody { flex: 1; min-height: 0; display: flex; padding: 12px 18px 15px 8px; }
.libleft { width: 317px; display: flex; flex-direction: column; }
.libleft .treebox { margin-bottom: 1px; background: #f0f0f0; }
.libleft .hscroll { padding: 8px 0 0 17px; height: 17px; }
.libleft .hscroll span { width: 83%; }
.library .tree { margin: 0 16px 0 1px; padding-left: 7px; background: #fff; }
.libtools { display: flex; gap: 2px; padding-left: 3px; height: 26px; }
.libplot { flex: 1; display: flex; flex-direction: column; align-items: flex-start; justify-content: space-between; }
.libplot .drop { margin: 4px 0 0 170px; }
.axes { display: flex; align-items: center; align-self: stretch; padding: 0 14px 1px 17px; }
.help { margin-right: auto; }
.axes label { margin: 4px 3px 0 7px; }
.axes .sel { margin-bottom: 4px; }
.axes .sel select { border-color: #ccc; }
.w-x { width: 84px; }
.w-y { width: 126px; margin-right: 5px; }
.axes .tb + .tb { margin-left: 5px; }
.grip { width: 5px; background: linear-gradient(#d4d4d4 0 142px, #fff 142px 193px, #d4d4d4 193px); display: flex; align-items: center; }
.grip i { border: solid transparent; border-width: 5px 0 5px 5px; border-left-color: #000; }
.analyst { left: 680px; top: 163px; width: 382px; height: 299px; }
.analyst .menubar { padding: 0 6px; }
.analyst .list { flex: 1; margin: 8px 5px 43px; background: #fff; border: 1px solid #777; }
.dialog { left: 675px; top: 379px; width: 267px; height: 192px; }
.dialog > header { height: 25px; padding-left: 2px; gap: 5px; background: #e9f9ea; color: #111; }
.dialog .winbtns button { width: 30px; }
.fields { height: 125px; margin: 2px 2px 0; padding-top: 16px; border: 1px solid #666; white-space: nowrap; }
.fields p { line-height: 14px; text-align: center; margin: 0 -4px 18px; }
.field { position: relative; display: flex; align-items: center; gap: 2px; height: 23px; padding-left: 6px; margin-bottom: 8px; }
.field input { width: 81px; height: 22px; padding: 0 2px 4px; background: #fff; border-bottom: 1px solid #777; }
.field.active input { border-bottom: 2px solid #0067c0; }
.caret { position: absolute; left: 149px; top: 3px; width: 1px; height: 12px; background: #000; }
.actions { display: flex; gap: 5px; margin: 4px 0 0 5px; width: 118px; height: 30px; padding: 4px; border: 1px solid #666; }
.actions button { width: 52px; height: 20px; background: #fdfdfd; border: 1px solid #ccc; border-radius: 3px; }

/* desktop taskbar */
.taskbar { position: relative; display: grid; grid-template-columns: 1fr auto 1fr; align-items: center; height: 48px; background: #cbf0cd; flex: none; font-family: "Open Sans", "Noto Sans CJK SC", sans-serif; }
.apps { grid-column: 2; display: flex; align-items: center; padding-left: 2px; }
.app { width: 44px; height: 40px; display: grid; place-items: center; position: relative; }
.app svg { width: 24px; height: 24px; }
.run::after { content: ""; position: absolute; bottom: 1px; left: 19px; width: 6px; height: 3px; border-radius: 2px; background: #748a75; }
.current { background: linear-gradient(#e6f8e7, #e6f8e7) center / 38px 38px no-repeat; }
.current::after { left: 14px; width: 16px; background: #0078d4; }
.find { display: flex; align-items: center; justify-content: center; gap: 5px; width: 98px; height: 30px; margin: 0 3px 0 5px; border-radius: 15px; background: #ecf9ed; font: 13px/20px "Noto Sans CJK SC", sans-serif; }
.find svg { width: 14px; height: 14px; }
.tray { display: flex; align-items: center; justify-content: flex-end; gap: 16px; padding-right: 20px; }
.chev { width: 12px; height: 12px; }
.ime { font: 14px/20px "Noto Sans CJK SC", sans-serif; }
.sys { display: flex; gap: 7px; }
.sys svg { width: 17px; height: 16px; }
.clock { display: flex; flex-direction: column; align-items: flex-end; font-size: 12px; margin-right: -8px; }
.badge { width: 16px; height: 16px; border-radius: 8px; background: #0067c0; color: #fff; text-align: center; font-size: 11px; }
.mark { position: absolute; right: 16px; top: 18px; color: rgba(245,250,245,.7); font: 18px/22px "Liberation Sans", sans-serif; text-shadow: 1px 1px 1px rgba(0,0,0,.55); }
```
FILE: app.js
```js
/* ---- trees ---- */
function build(root, nodes) {
  for (const n of nodes) {
    const li = document.createElement('li');
    const kids = n.kids;
    let html = '<div class="row">';
    if (kids || n.plus) {
      html += `<button class="ex${kids ? '' : ' plus'}" aria-label="Toggle"></button><i class="stub"></i>`;
    } else {
      html += '<i class="stub long"></i>';
    }
    if ('on' in n) html += `<input type="checkbox" aria-label="${n.t}"${n.on ? ' checked' : ''}>`;
    html += `<svg class="t-${n.i}"${n.c ? ` color="${n.c}"` : ''}><use href="#${n.i}"/></svg>`;
    if (n.bar) html += `<i class="bar2" style="background:${n.bar}"></i>`;
    html += `<span class="${n.sel ? 'sel-label' : ''}">${n.t.replace(/ {2}/g, '&nbsp; ')}</span></div>`;
    li.innerHTML = html;
    if (kids && kids.length) {
      const ul = document.createElement('ul');
      build(ul, kids);
      li.append(ul);
    }
    root.append(li);
  }
}
const F = t => ({ t, i: 'folder', plus: true });
const T = (t, sel) => ({ t, i: 'tool', sel });
const B = (t, c, bar) => ({ t, i: 'band', c, bar });

build(document.getElementById('layerTree'), [
  { t: 'View', i: 'eye', kids: [
    { t: 'Overview', i: 'eye', on: false },
    { t: 'PPI.dat', i: 'ras', on: true, kids: [
      B('PPI (MNF.dat)', '#444'),
      { t: 'Regions of Interest', i: 'folderopen', on: true, kids: [{ t: 'ROI #1', i: 'roi', on: true, sel: true }] }
    ] },
    { t: 'MNF.dat', i: 'ras', on: true, kids: [B('MNF Band 1 (CupriteReflectance.dat)', '#444')] },
    { t: 'CupriteReflectance.dat', i: 'rasc', on: true, kids: [
      B('FLAASH (Band 29:CupriteAVIRIS)', '#d01010', '#ff2a1a'),
      B('FLAASH (Band 20:CupriteAVIRIS)', '#10b010', '#8cf01a'),
      B('FLAASH (Band 12:CupriteAVIRIS)', '#1010c0', '#1a9cf0')
    ] }
  ] }
]);

build(document.getElementById('toolTree'), [
  { t: 'Favorites', i: 'folderfav', plus: true },
  ...['Anomaly Detection', 'Band Algebra', 'Change Detection', 'Classification', 'Feature Extraction', 'Filter', 'Geometric Correction', 'Image Sharpening', 'LiDAR', 'Mosaicking', 'Radar', 'Radiometric Correction', 'Raster Management', 'Regions of Interest', 'Spatiotemporal Analysis', 'SPEAR'].map(F),
  { t: 'Spectral', i: 'folderopen', kids: [
    T('Build 3D Cube'), F('Mapping Methods'), F('Pixel Purity Index'), T('SMACC Endmember Extraction'), T('Spectral Analyst', true),
    F('Spectral Libraries'), T('Spectral Math'), T('Spectral Resampling'), F('Spectral Slices'), F('Spectral Unmixing'), F('Vegetation'),
    { t: 'n-Dimensional Visualizer', i: 'folderopen', kids: [T('n-Dimensional Visualizer Auto Cluster'), T('n-Dimensional Visualizer New Data'), T('n-Dimensional Visualizer Saved Data')] }
  ] },
  ...['Statistics', 'Target Detection', 'THOR', 'Terrain', 'Transform', 'Vector'].map(F),
  { t: 'Extensions', i: 'folder' }
]);

build(document.getElementById('libTree'), [
  F('aster  (2443)'), F('igcp264  (6)'), F('usgs  (1994)'), F('veg_lib  (2)'),
  { t: 'MNF.sli  (14)', i: 'sli', kids: Array.from({ length: 13 }, (_, k) => ({ t: 'Spectrum #' + (k + 1), i: 'wave' })) },
  F('more')
]);

/* ---- raster layer: cells addressed in screen units, 1.713 per cell ---- */
let seed = 7;
const rnd = () => (seed = (seed * 16807) % 2147483647) / 2147483647;
const S = 1.713, g = document.getElementById('raster').getContext('2d');
const cell = (x, y, w, h) => g.fillRect(Math.round((x - 390) / S), Math.round((y - 108) / S), w, h);

function speckle(cx, cy, rx, ry, n) {
  for (let k = 0; k < n; k++) {
    const a = rnd() * 6.283, r = rnd() * .6 + Math.sqrt(rnd()) * .4;
    const v = 6 + Math.floor(rnd() * 14);
    g.fillStyle = `rgb(${v},${v},${v})`;
    cell(cx + Math.cos(a) * r * rx, cy + Math.sin(a) * r * ry, 1 + Math.floor(rnd() * 2), 1 + Math.floor(rnd() * 2));
  }
}
speckle(1365, 180, 60, 75, 320); speckle(1275, 180, 30, 65, 130); speckle(1230, 150, 60, 45, 40);
speckle(1345, 910, 45, 95, 620); speckle(1210, 940, 70, 60, 700); speckle(1240, 830, 70, 30, 220); speckle(1395, 960, 25, 50, 100);
speckle(420, 740, 35, 70, 90); speckle(475, 620, 50, 60, 40); speckle(525, 130, 30, 25, 25); speckle(430, 880, 50, 100, 40);

g.fillStyle = '#f00';
function poly(pts, dens) {
  const xs = pts.map(p => p[0]), ys = pts.map(p => p[1]);
  for (let y = Math.min(...ys); y < Math.max(...ys); y += S) {
    for (let x = Math.min(...xs); x < Math.max(...xs); x += S) {
      let inside = false;
      const qx = x + (rnd() - .5) * 9, qy = y + (rnd() - .5) * 7;
      for (let i = 0, j = pts.length - 1; i < pts.length; j = i++) {
        const [a, b] = pts[i], [c, d] = pts[j];
        if ((b > qy) !== (d > qy) && qx < (c - a) * (qy - b) / (d - b) + a) inside = !inside;
      }
      const p = typeof dens === 'function' ? dens(x, y) : dens;
      if (inside && rnd() < p) cell(x, y, 1, rnd() < .3 ? 2 : 1);
    }
  }
}
poly([[1128, 806], [1159, 806], [1166, 838], [1150, 850], [1140, 868], [1125, 882], [1115, 874], [1100, 884], [1091, 889], [1095, 850], [1108, 823]], .93);
poly([[1134, 856], [1160, 858], [1162, 893], [1147, 905], [1132, 888]], .5);
poly([[1292, 859], [1305, 875], [1323, 900], [1334, 943], [1347, 977], [1368, 1002], [1104, 1002], [1110, 982], [1143, 956], [1178, 943], [1199, 933], [1219, 893], [1260, 878]],
  (x, y) => {
    const core = Math.exp(-(((x - 1255) / 42) ** 2) - (((y - 925) / 48) ** 2));
    const edge = x < 1175 ? .12 : 0;
    return .34 - edge + .48 * core + .1 * Math.sin(x * .5);
  });
poly([[1165, 920], [1220, 900], [1220, 940], [1140, 960]], .12);
poly([[1330, 925], [1368, 935], [1368, 1000], [1340, 980]], .04);
poly([[1200, 955], [1300, 945], [1320, 1000], [1170, 1000]], .25);

/* patches: x, y, width, height, fill density */
const patches = [
  [517,122,6,4],[519,126,3,4],[545,111,2,2],[563,108,10,3],[567,111,6,5,.7],[578,108,6,4,.7],[585,108,4,2],[550,149,3,3],[591,136,1,2],[601,212,3,3],[452,416,4,4],[472,430,2,2],[399,470,2,3],[536,469,5,2],[558,546,5,4],[559,551,4,2],[514,565,2,7],[536,574,4,4],[543,580,5,4],[498,588,1,4],[513,594,3,8],[517,605,5,3],[505,616,11,9,.6],[545,623,3,3],[551,622,2,4],[538,634,2,2],[461,628,2,3],[546,656,3,2],[551,657,2,1],[520,667,5,4],[530,664,3,8],[508,671,4,4],[503,683,5,3],[533,679,4,2],[532,700,6,8,.7],[498,703,1,8],[499,712,11,3],[441,679,2,2],[407,682,4,1],[391,690,6,4],[391,697,2,6],[440,735,3,4],[512,740,2,3],[501,742,4,12],[497,755,4,6],[486,755,2,4],[402,750,10,12,.75],[392,749,12,4,.6],[410,760,9,8,.5],[430,758,3,5],[402,780,9,8,.6],[391,790,6,8],[396,797,7,5,.6],[443,786,2,3],[515,771,4,4],[476,807,5,4],[448,814,2,2],[401,815,2,2],[441,820,2,3],[452,826,2,2],[473,845,4,5],[468,851,7,2],[485,844,3,6],[493,846,3,5],[461,864,1,1],[482,864,3,4],[467,880,4,4],[481,880,3,4],[397,878,4,2],[467,896,5,2],[505,924,2,4],[498,930,3,3],[488,932,2,1],[459,924,2,4],[404,932,8,3],[483,952,5,5],[455,992,8,8,.6],[592,686,3,2],[594,703,2,2],[589,715,5,3],[601,747,7,5],[580,838,4,3],[639,725,1,1],[876,685,7,5],[883,701,3,3],[845,711,5,4],[842,730,4,3],[883,762,4,5],
  [1242,108,2,4],[1263,120,18,3],[1276,123,7,6],[1282,128,5,4],[1272,142,13,5],[1277,137,3,5],[1244,136,6,4,.7],[1249,132,6,4,.7],[1238,147,4,2],[1237,151,2,3],[1252,157,4,5,.7],[1290,153,3,5],[1286,161,2,4],[1266,179,9,6,.6],[1275,177,4,3],[1269,188,2,7],[1283,208,6,9],[1281,218,5,12,.7],[1258,233,2,2],[1247,238,1,4],[1315,195,2,2],[1311,206,1,2],[1310,236,10,8,.6],[1319,241,9,6,.8],[1335,238,1,2],[1324,110,1,3],[1317,125,5,4,.6],[1329,117,8,1],[1341,132,2,2],[1318,155,2,2],[1348,158,1,1],[1360,108,7,16,.75],[1366,120,4,10,.8],[1378,108,6,2],[1377,114,2,2],[1392,108,18,10,.75],[1411,108,9,6,.7],[1411,122,5,5],[1409,135,3,6],[1394,142,6,3],[1399,146,14,8,.8],[1411,156,4,8,.8],[1374,140,10,1],[1371,163,24,8,.5],[1339,174,2,2],[1347,178,2,2],[1353,181,2,3],[1380,180,8,3,.6],[1386,187,12,1],[1397,191,2,4],[1413,170,7,12,.6],[1405,175,3,2],[1414,186,6,2],[1344,201,4,5],[1383,202,8,5,.9],[1401,207,3,2],[1378,214,5,8,.6],[1383,220,6,10,.7],[1393,217,8,18,.75],[1410,229,6,5,.7],[1347,219,6,4],[1350,222,20,6,.5],[1372,229,1,2],
  [1222,810,20,9,.7],[1236,824,14,22,.45],[1228,840,14,8,.3],[1310,807,16,12,.6],[1268,826,12,7,.5],[1177,825,7,14,.4],[1184,863,10,11,.9],[1134,911,4,7],[1293,812,3,6],[1207,820,2,4],[1171,880,3,9],[1091,836,7,3],[1168,848,12,16,.35],[1202,860,3,5],[1337,843,3,3],[1285,862,18,10,.5],[1266,866,3,6],[1117,936,2,2],[1148,938,4,4,.6],[1356,930,12,10,.3],[1112,970,4,8,.6],[1214,831,8,4,.5]
];
for (const [x, y, w, h, d = 1] of patches) {
  for (let j = 0; j + .9 < h; j += S) for (let i = 0; i + .9 < w; i += S) if (rnd() < d) cell(x + i, y + j, 1, 1);
}

/* ---- n-D scatter points: offsets in thirds from the plot's (289, 61) corner ---- */
const pts = '538,67 457,181 466,232 484,271 463,325 524,367 527,370 556,361 577,358 616,364 607,391 616,391 454,394 469,391 484,394 523,394 478,406 475,412 454,415 550,418 553,418 604,433 685,394 682,436 430,445 439,442 451,472 658,487 628,502 667,544 451,562 451,580 490,565 466,601 496,616 514,625 460,628 541,619 568,619 586,613 601,619 580,631 643,580 661,589 676,595 742,571 712,619 730,631 520,655 571,664 586,655 589,652 616,649 628,670 598,676 562,682 559,700 472,676 430,688 448,700 469,700 439,715 439,724 433,730 430,745 460,724 466,739 508,703 502,724 508,727 511,739 508,754 505,757 577,712 586,721 577,748 586,745 619,727 637,742 667,688 673,682 685,679 685,694 706,685 712,679 724,679 739,664 751,655 748,694 700,712 709,715 691,745 697,745 805,673 781,703 811,709 493,775 526,772 535,778 457,808 466,799 490,799 505,805 514,799 610,778 610,784 640,787 640,811 616,817 619,823 625,826 661,817 706,781 721,787 730,778 754,760 700,802 757,805 808,787 457,835 454,871 460,877 454,895 457,895 487,895 496,904 505,901 523,871 535,856 541,856 565,841 598,853 634,862 610,874 655,877 682,898 694,919 718,868 730,856 745,862 784,838 796,868 790,880 799,910 757,916 514,934 526,943 532,937 547,913 595,910 604,913 601,937 682,940 472,955 487,961 517,970 517,982 535,952 547,952 550,961 556,967 559,975 538,1015 523,1009 496,1009 499,1024 427,997 448,1000 427,1021 610,1012 694,994 721,970 742,994 673,1030 784,1012 778,1024 766,1039 823,958 901,985 901,1006 916,1006 892,1018 931,1030 934,1063 508,1063 517,1057 514,1087 463,1072 571,1087 577,1084 583,1084 595,1072 568,1102 571,1106 541,1096 598,1114 652,1057 661,1087 670,1090 652,1096 664,1117 640,1132 721,1084 730,1099 712,1126 742,1129 787,1138 829,1090 856,1096 862,1066 898,1069 907,1093 952,1084 958,1075 877,1117 925,1126 979,1111 511,1129 502,1144 457,1150 490,1168 496,1183 478,1189 487,1207 520,1183 526,1183 529,1180 541,1171 541,1189 553,1189 559,1205 565,1210 547,1213 583,1153 592,1153 595,1144 607,1150 580,1201 586,1201 622,1216 649,1159 670,1153 679,1165 685,1171 700,1171 673,1187 673,1195 667,1198 727,1180 736,1189 772,1177 778,1168 799,1187 799,1195 823,1171 829,1171 358,1138 340,1168 352,1186 355,1189 391,1216 343,1261 421,1192 421,1264 448,1261 451,1231 490,1246 514,1261 532,1255 577,1279 610,1279 688,1228 691,1234 685,1270 739,1228 754,1228 742,1243 748,1261 784,1234 775,1270 793,1276 838,1270 841,1267 856,1270 898,1261 886,1237 898,1234 913,1213 916,1201 946,1192 973,1207 634,1306 787,1297 814,1306 739,1327 469,1294 439,1336 469,1351 88,1060 253,1045 328,1036 10,1096 31,1096 88,1105 7,1132 145,1132 -417,1111 -404,1090 -389,1063 -343,1051 -293,1046 -311,1078 -359,1081 -350,1090 -58,1117'.split(' ');
const p = document.getElementById('scatter').getContext('2d');
p.fillStyle = '#fff';
for (const s of pts) {
  const [x, y] = s.split(',').map(Number);
  p.fillRect(289 + Math.floor(x / 3), 61 + Math.floor(y / 3), 1, 1);
}
```
